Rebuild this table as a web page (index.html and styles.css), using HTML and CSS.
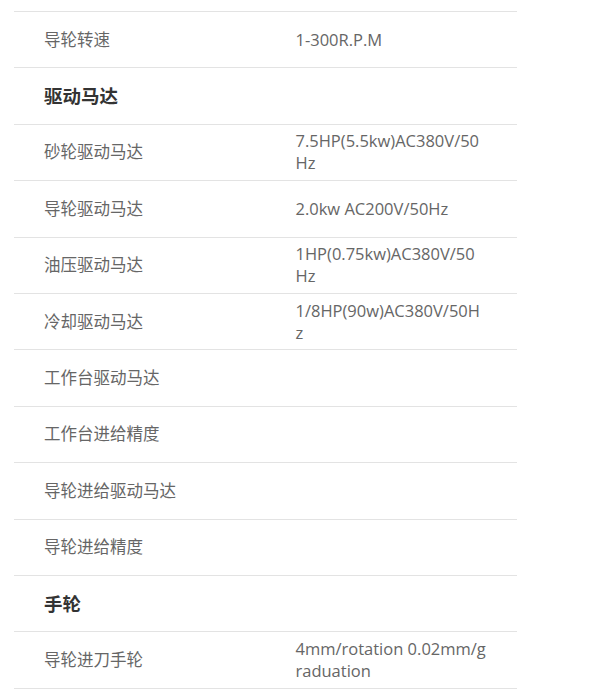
FILE: index.html
```html
<!DOCTYPE html>
<html lang="zh-CN">
<head>
  <meta charset="UTF-8" />
  <meta name="viewport" content="width=device-width, initial-scale=1.0"/>
  <title>参数</title>
  <link rel="stylesheet" href="styles.css">
</head>
<body>

<div class="specs">
  <table>
    <tbody>
      <tr>
        <td>导轮转速</td>
        <td>1-300R.P.M</td>
      </tr>
      <tr class="group">
        <td colspan="2">驱动马达</td>
      </tr>
      <tr>
        <td>砂轮驱动马达</td>
        <td>7.5HP(5.5kw)AC380V/50Hz</td>
      </tr>
      <tr>
        <td>导轮驱动马达</td>
        <td>2.0kw AC200V/50Hz</td>
      </tr>
      <tr>
        <td>油压驱动马达</td>
        <td>1HP(0.75kw)AC380V/50Hz</td>
      </tr>
      <tr>
        <td>冷却驱动马达</td>
        <td>1/8HP(90w)AC380V/50Hz</td>
      </tr>
      <tr>
        <td>工作台驱动马达</td>
        <td></td>
      </tr>
      <tr>
        <td>工作台进给精度</td>
        <td></td>
      </tr>
      <tr>
        <td>导轮进给驱动马达</td>
        <td></td>
      </tr>
      <tr>
        <td>导轮进给精度</td>
        <td></td>
      </tr>
      <tr class="group">
        <td colspan="2">手轮</td>
      </tr>
      <tr>
        <td>导轮进刀手轮</td>
        <td>4mm/rotation 0.02mm/graduation</td>
      </tr>
    </tbody>
  </table>
</div>

</body>
</html>
```

FILE: styles.css
```css
body {
  margin: 0;
  background: #fff;
  font-family: "Open Sans", "Noto Sans CJK SC", sans-serif;
}
.specs {
  padding: 11px 0 0 14px;
}
table {
  width: 503px;
  border-collapse: collapse;
  table-layout: fixed;
  border-top: 1px solid #e3e3e3;
}
td {
  width: 50%;
  height: 55.4px;
  padding: 0 31px 0 30px;
  border-bottom: 1px solid #e3e3e3;
  font-size: 16.5px;
  line-height: 22px;
  color: #666;
  vertical-align: middle;
  word-break: break-all;
}
.group td {
  font-size: 18.5px;
  font-weight: bold;
  color: #333;
}
```
